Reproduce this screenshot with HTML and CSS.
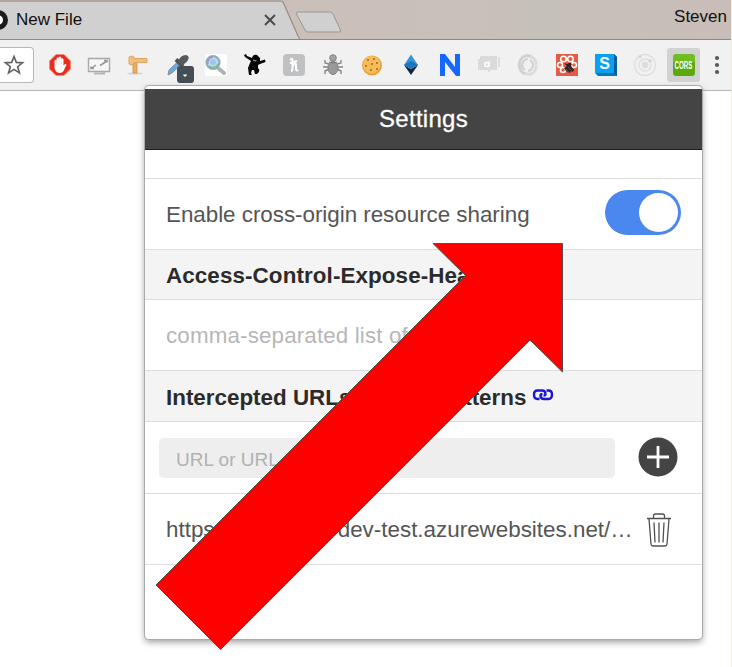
FILE: index.html
```html
<!DOCTYPE html>
<html lang="en">
<head>
<meta charset="utf-8">
<title>New File</title>
<link rel="stylesheet" href="styles.css">
</head>
<body>
<header class="tabs">
  <svg class="tab-shapes" width="732" height="39" viewBox="0 0 732 39">
    <path d="M0 1.5H281Q283 1.5 284 4L298 37L300 39H0Z" fill="#d0d0d0"/>
    <path d="M0 1H281Q283 1 284 4L298 36L300 39" fill="none" stroke="#958b86" stroke-width="1.2"/>
    <path d="M298.500 12H330Q332 12 333 14L340.500 30Q341 32 339 32H308Q306 32 305 30L296.500 14Q296 12 298.500 12Z" fill="#d0d0d0" stroke="#9e9592"/>
  </svg>
  <svg class="favicon" width="9" height="24" viewBox="0 0 9 24"><circle cx="-2" cy="12" r="7.500" fill="#fff" stroke="#1b1b1b" stroke-width="5"/></svg>
  <span class="tab-title">New File</span>
  <svg class="close" width="12" height="12" viewBox="0 0 12 12"><path d="M1 1L11 11M11 1L1 11" stroke="#4b4b4b" stroke-width="2"/></svg>
  <span class="user">Steven</span>
</header>

<nav class="toolbar">
  <div class="address"><svg width="22" height="22" viewBox="0 0 22 22"><path d="M11 2.500L13.300 8.400L19.500 8.800L14.700 12.700L16.400 18.900L11 15.400L5.600 18.900L7.300 12.700L2.500 8.800L8.700 8.400Z" fill="none" stroke="#606366" stroke-width="1.700"/></svg></div>
  <div class="icons">
    <span><svg width="24" height="24" viewBox="0 0 24 24"><path d="M8 1.500H16L22.500 8V16L16 22.500H8L1.500 16V8Z" fill="#e92c1c" stroke="#f58b7c"/><path d="M6.500 11V7.500Q7.500 6 8.500 7.500V5.500Q9.500 3.800 10.800 5V4Q12 2.800 13.200 4.500V5.500Q14.700 4.500 15.500 6.500V12.500L17 11Q18.700 10.500 18.400 12L15.500 18Q14 20.500 11 20Q7.500 19.500 6.500 15Z" fill="#fff"/><path d="M8.700 7V12M11 5.500V12M13.400 6V12" stroke="#f7c8c0" stroke-width=".5"/></svg></span>
    <span><svg width="24" height="24" viewBox="0 0 24 24"><path d="M1.500 5.500H22.500V18.500H1.500Z" fill="#f6f6f6" stroke="#a8a8a8" stroke-width="1.400"/><path d="M7 20.500H17V18.500" fill="none" stroke="#b5b5b5" stroke-width="2"/><path d="M4 15.500L9 12M13 12.500L20 8M17 7.500H20V9.500M4 13.500V15.500H7" fill="none" stroke="#969696" stroke-width="1.500"/></svg></span>
    <span><svg width="24" height="24" viewBox="0 0 24 24"><ellipse cx="9" cy="20.500" rx="8" ry="1.200" fill="#d4d4d4"/><path d="M7 9H11V20H7Z" fill="#e9ad63" stroke="#cb8b43" stroke-width=".7"/><path d="M3 4L5.500 3L8 4V5.500H21V9.500H8V11L5.500 12L3 11Z" fill="#f1be7d" stroke="#d89b51" stroke-width=".8"/></svg></span>
    <span><svg class="picker" width="28" height="30" viewBox="0 0 28 30"><path d="M2 22L3 17L11 9.500L14 12.500L6 20Z" fill="#62ace8" stroke="#87929b"/><path d="M10 6.500L17 13.500" stroke="#4a5054" stroke-width="4"/><path d="M12 9Q14 2 20 2Q24 3 22 7Q20 11 15 12Z" fill="#555a5d"/><rect x="11" y="13" width="17" height="17" rx="3" fill="#444e55"/><path d="M17 21H19V23H17Z" fill="#53b1ed"/><path d="M19 21H21V23H19Z" fill="#ee8b69"/><path d="M18 22H20V23.500H18Z" fill="#fff"/></svg></span>
    <span><svg width="24" height="24" viewBox="0 0 24 24"><path d="M1 1H23V23H1Z" fill="#fff"/><path d="M14 15L20 20" stroke="#b1b1b1" stroke-width="4" stroke-linecap="round"/><circle cx="9" cy="9.500" r="6.500" fill="#bdd9ee" stroke="#8fabb9" stroke-width="2.200"/><path d="M4 11A5.500 5.500 0 0 1 9 4" fill="none" stroke="#ab8bd1" stroke-width="1.500"/><path d="M5 13A5.500 5.500 0 0 0 14 11" fill="none" stroke="#7dbd87" stroke-width="1.700"/><circle cx="9" cy="9" r="3" fill="#96cbe9"/></svg></span>
    <span><svg width="24" height="24" viewBox="0 0 24 24"><path d="M1 2L3 1L4 3L9 5Q10 1 14 2L17 5L17 8L22 6.500L22.500 9L17 11L15 12V15Q18 18 14 21H12L11 17L9 17L8 20L9 22H6L5 15L7 10L8 8L2 4Z" fill="#060606"/><path d="M10 6.500L14 7.500L13 8.500L10 8Z" fill="#888"/></svg></span>
    <span><svg width="24" height="24" viewBox="0 0 24 24"><rect x="1" y="1" width="22" height="22" rx="4" fill="#bec0c1"/><path d="M9 18Q10.500 18 10.500 15V7Q10.500 4.500 8 7M10.500 13Q14 9 14 12V16Q14 18.500 16.500 17M8 10L15 8" fill="none" stroke="#fff" stroke-width="2"/></svg></span>
    <span><svg width="24" height="24" viewBox="0 0 24 24"><path d="M8 11L4 10V7M8 14H2M8 16L4 18V21M16 11L20 10V7M16 14H22M16 16L20 18V21" fill="none" stroke="#858585" stroke-width="1.400"/><ellipse cx="12" cy="15" rx="5" ry="6.500" fill="#999" stroke="#808080"/><circle cx="12" cy="5" r="3.300" fill="#a3a3a3" stroke="#858585"/><path d="M8 9Q12 11 16 9" fill="none" stroke="#777"/></svg></span>
    <span><svg width="24" height="24" viewBox="0 0 24 24"><circle cx="12" cy="12.500" r="10" fill="#e8a33d"/><circle cx="11.600" cy="11.600" r="8.800" fill="#f7bc59"/><g fill="#9c6430"><circle cx="8" cy="7" r="1"/><circle cx="14" cy="6" r="1"/><circle cx="12" cy="11" r="1"/><circle cx="6" cy="13" r="1"/><circle cx="17" cy="10" r="1"/><circle cx="11" cy="17" r="1"/><circle cx="17" cy="16" r="1"/></g></svg></span>
    <span><svg width="24" height="24" viewBox="0 0 24 24"><path d="M12 1.500L19 12L12 15L5 12Z" fill="#3694dc"/><path d="M5 12L12 16L19 12L12 22Z" fill="#10283e"/><path d="M5 12L12 8L19 12L12 16Z" fill="#1b76bd"/></svg></span>
    <span><svg width="24" height="24" viewBox="0 0 24 24"><path d="M2 1H7L17 14V1H22V23H18L7 9V23H2Z" fill="#1268ff"/></svg></span>
    <span><svg width="24" height="24" viewBox="0 0 24 24"><path d="M3 3H20V17H14L11 20V17H1V6H3Z" fill="#dadada"/><path d="M22 4V14" stroke="#dedede" stroke-width="2"/><path d="M12 8.500V14" stroke="#fff" stroke-width="1.700"/><circle cx="9.600" cy="11.500" r="2" fill="none" stroke="#fff" stroke-width="1.500"/></svg></span>
    <span><svg width="24" height="24" viewBox="0 0 24 24" fill="none"><path d="M9 21A10 10 0 0 1 9 3Q12 1.500 15 4" stroke="#d0d0d0" stroke-width="3"/><path d="M14 3A10 10 0 0 1 15 21Q12 22 9 20" stroke="#dcdcdc" stroke-width="3"/><path d="M9 17A6 6 0 0 1 12 6M14 7A6 6 0 0 1 12 18" stroke="#d0d0d0" stroke-width="2"/></svg></span>
    <span><svg width="24" height="24" viewBox="0 0 24 24"><path d="M1 1H23V23H1Z" fill="#e65b45"/><g fill="none" stroke="#fff" stroke-width="1.500"><circle cx="8.500" cy="6" r="2.800"/><circle cx="15.500" cy="6" r="2.800"/><circle cx="5" cy="12" r="2.500"/><circle cx="19" cy="12" r="2.500"/><circle cx="8" cy="17" r="2.500"/></g><path d="M9 10L12 11L15 9.500L17 11L16 13L19 17L18 19L16 18L15 20L11 18L9 15L12 13Z" fill="#302322"/><path d="M13 14L17 18M11 16L14 19" stroke="#a24d37" stroke-width=".7"/></svg></span>
    <span><svg width="24" height="24" viewBox="0 0 24 24"><path d="M1 1H20L23 4V23H4L1 20Z" fill="#0877bd"/><path d="M1 1H20V20H1Z" fill="#0ba1f2"/><path d="M20 1L23 4V23L20 20Z" fill="#065f9c"/><text x="10.500" y="16.200" class="logo-s">S</text></svg></span>
    <span><svg width="24" height="24" viewBox="0 0 24 24" fill="none" stroke="#dfdfdf"><circle cx="12" cy="12" r="10.500" stroke-width="1.300"/><circle cx="12" cy="12" r="6" stroke-width="1.300"/><circle cx="12" cy="12" r="3" fill="#ddd"/><circle cx="7" cy="3.500" r="1.500" fill="#d2d2d2"/><circle cx="17" cy="8" r="1.500" fill="#d2d2d2"/></svg></span>
    <span class="active"><div class="cors"><b>CORS</b></div></span>
  </div>
  <svg class="menu" width="6" height="22" viewBox="0 0 6 22" fill="#575a5e"><circle cx="3" cy="4" r="2.100"/><circle cx="3" cy="11" r="2.100"/><circle cx="3" cy="18" r="2.100"/></svg>
</nav>

<main class="popup">
  <h1>Settings</h1>
  <div class="spacer"></div>
  <section class="row enable"><span>Enable cross-origin resource sharing</span><div class="toggle"><i></i></div></section>
  <h2 class="expose">Access-Control-Expose-Headers</h2>
  <section class="row headers"><span class="placeholder">comma-separated list of headers</span></section>
  <h2 class="patterns">Intercepted URLs or URL patterns
    <svg width="22" height="14" viewBox="0 0 22 14"><path d="M7.500 11H5.500Q2 11 2 6.500Q2 2.500 5.500 2.500H10Q13.500 2.500 13.500 6Q13.500 7.500 11.500 7.500M14.500 2.500H16.500Q20 2.500 20 6.500Q20 11 16.500 11H12Q8.500 11 8.500 7.500Q8.500 6 10.500 6" fill="none" stroke="#1717d0" stroke-width="2.400"/></svg>
  </h2>
  <section class="row entry"><div class="field">URL or URL pattern</div><svg width="40" height="40" viewBox="0 0 40 40"><circle cx="20" cy="20" r="19.500" fill="#444"/><path d="M20 9V31M9 20H31" stroke="#fff" stroke-width="2.800"/></svg></section>
  <section class="row url"><span>https://myproject-dev-test.azurewebsites.net/…</span><svg width="26" height="36" viewBox="0 0 26 36" fill="none" stroke="#505050" stroke-width="1.300"><path d="M1 6.500H25M7.500 6V4Q7.500 2 9.500 2H16.500Q18.500 2 18.500 4V6M3 7L5 32Q5.200 34 7 34H19Q20.800 34 21 32L23 7M8 10.500L9 30.500M13 10.500V30.500M18 10.500L17 30.500"/></svg></section>
</main>

<svg class="arrow" width="732" height="667" viewBox="0 0 732 667"><path d="M433 243.500H562.500V372L530 340L220.500 649.500L156 585L465.500 275.500Z" fill="#f00" stroke="#505050"/></svg>
<div class="edge"></div>
</body>
</html>
```
FILE: styles.css
```css
* { box-sizing: border-box; }
body {
  position: relative;
  width: 732px;
  height: 667px;
  margin: 0;
  overflow: hidden;
  background: #fff;
  color: #555;
  font-family: "Liberation Sans", Arial, sans-serif;
}
svg { display: block; flex: none; }
.tabs {
  position: relative;
  display: flex;
  align-items: center;
  height: 39px;
  padding: 1px 5px 0 0;
  background: linear-gradient(90deg, #ccbfb9 40%, #c6c0ba 75%, #c9bdb8);
  color: #111;
  font-size: 17px;
}
.tab-shapes { position: absolute; left: 0; top: 0; }
.favicon, .tab-title, .close, .user { position: relative; }
.tab-title { margin-left: 7px; width: 248px; }
.user { margin-left: auto; margin-top: -7px; }
.toolbar {
  display: flex;
  align-items: center;
  height: 52px;
  border-top: 1px solid #8f8783;
  border-bottom: 1px solid #b4b4b4;
  background: #f1f1f1;
}
.address {
  display: flex;
  align-items: center;
  width: 34px;
  height: 36px;
  padding-left: 3px;
  border: 1px solid #b7b7b7;
  border-left: 0;
  border-radius: 0 4px 4px 0;
  background: #fff;
}
.icons {
  display: grid;
  grid-template-columns: repeat(17, 38.95px);
  margin-left: 7px;
}
.icons span {
  display: flex;
  align-items: center;
  justify-content: center;
  height: 34px;
}
.picker { margin: 5px 0 0 5px; }
.icons .active {
  width: 33px;
  margin-left: 3px;
  border-radius: 3px;
  background: #d2d2d2;
}
.menu { margin-left: 11px; }
.logo-s {
  fill: #fff;
  font-size: 16px;
  font-weight: bold;
  text-anchor: middle;
}
.cors {
  display: flex;
  flex: none;
  align-items: center;
  justify-content: center;
  width: 22px;
  height: 22px;
  border-radius: 3px;
  background: linear-gradient(#6fbd20 36%, #5baa09 36%);
  color: #fff;
  font-size: 10px;
}
.cors b { transform: scaleX(.62); }
.popup {
  position: absolute;
  left: 145px;
  top: 86px;
  width: 557px;
  height: 553px;
  padding-top: 3px;
  border-radius: 4px;
  background: #fff;
  box-shadow: 0 0 0 1px #aaa, 0 3px 7px rgba(0, 0, 0, .4);
  font-size: 22.4px;
}
h1, h2 { margin: 0; }
h1 {
  height: 61px;
  border-bottom: 1px solid #202020;
  background: #444;
  color: #fff;
  font-size: 24px;
  font-weight: normal;
  line-height: 60px;
  letter-spacing: .28px;
  text-align: center;
  -webkit-text-stroke: .3px #fff;
}
.spacer { height: 29px; border-bottom: 1px solid #ddd; }
.row {
  display: flex;
  align-items: center;
  padding-left: 21px;
  border-bottom: 1px solid #ddd;
  white-space: nowrap;
}
.enable { height: 71px; padding: 2px 21px 0 21px; letter-spacing: -.03px; }
.toggle {
  display: flex;
  justify-content: flex-end;
  width: 76px;
  height: 45px;
  margin: -5px 0 0 auto;
  padding: 3px;
  border-radius: 23px;
  background: #4a88ef;
}
.toggle i { width: 39px; height: 39px; border-radius: 50%; background: #fff; }
h2 {
  display: flex;
  align-items: center;
  padding: 2px 0 0 21px;
  border-bottom: 1px solid #ddd;
  background: #f4f4f4;
  color: #2b2b2b;
  font-size: 22.4px;
}
.expose { height: 50px; letter-spacing: .1px; }
.headers { height: 71px; padding-top: 2px; letter-spacing: .13px; }
.placeholder { color: #b7b7b7; }
.patterns { height: 51px; gap: 6px; padding-top: 3px; }
.patterns svg { margin-bottom: 6px; }
.entry { height: 72px; padding: 0 24px 2px 14px; justify-content: space-between; }
.field {
  width: 456px;
  height: 40px;
  margin-top: 2px;
  padding: 1px 0 0 17px;
  border-radius: 5px;
  background: #eee;
  color: #b1b1b1;
  font-size: 19px;
  line-height: 42px;
}
.url { height: 71px; padding-top: 1px; padding-right: 30px; justify-content: space-between; }
.arrow { position: absolute; left: 0; top: 0; }
.edge { position: absolute; right: 0; top: 0; width: 1px; height: 667px; background: #efefd6; }
```
